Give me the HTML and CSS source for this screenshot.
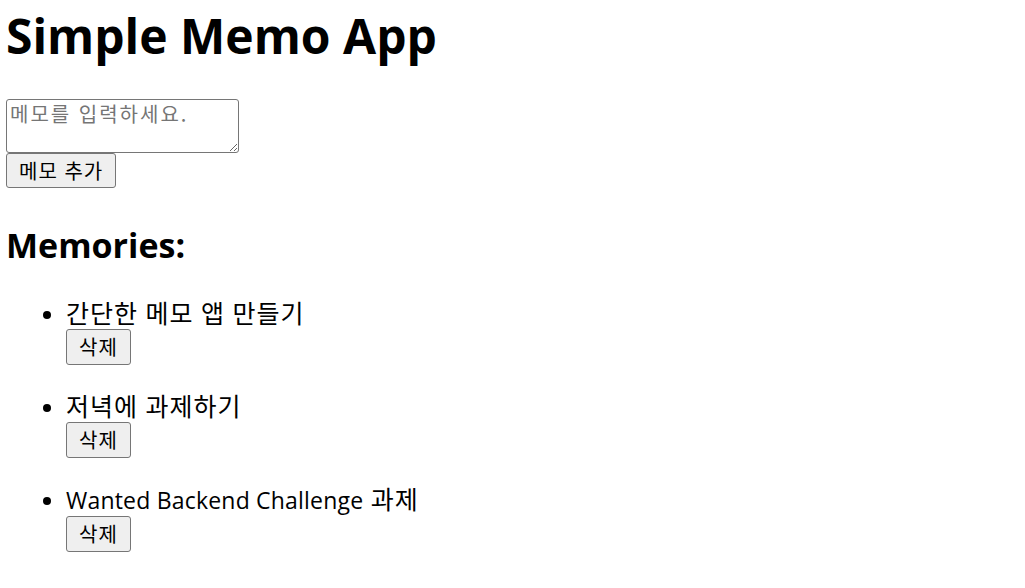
FILE: index.html
```html
<!DOCTYPE html>
<html lang="ko">
<head>
<meta charset="utf-8">
<title>Simple Memo App</title>
<link rel="stylesheet" href="styles.css">
</head>
<body>
<h1 class="title" lang="en">Simple Memo App</h1>
<div class="memo-form">
  <textarea class="memo-input" placeholder="메모를 입력하세요."></textarea>
  <button class="btn btn-add">메모 추가</button>
</div>
<h2 class="subtitle" lang="en">Memories:</h2>
<ul class="memo-list">
  <li class="memo-item">
    <div class="memo-text">간단한 메모 앱 만들기</div>
    <button class="btn btn-delete">삭제</button>
  </li>
  <li class="memo-item">
    <div class="memo-text">저녁에 과제하기</div>
    <button class="btn btn-delete">삭제</button>
  </li>
  <li class="memo-item">
    <div class="memo-text"><span lang="en">Wanted Backend Challenge</span> 과제</div>
    <button class="btn btn-delete">삭제</button>
  </li>
</ul>
</body>
</html>
```

FILE: styles.css
```css
body {
  margin: 0;
  padding: 0 6px;
  font-family: "Open Sans", "Noto Sans CJK KR", sans-serif;
  font-size: 22px;
  color: #000;
  background: #fff;
}

.title {
  font-size: 48px;
  font-weight: bold;
  line-height: 56px;
  margin: 8px 0 35px;
}

.memo-form {
  display: flex;
  flex-direction: column;
  align-items: flex-start;
}

.memo-input {
  box-sizing: border-box;
  width: 233px;
  height: 54px;
  margin: 0;
  padding: 2px 3px;
  border: 1px solid #767676;
  border-radius: 3px;
  font-family: "Noto Sans CJK KR", sans-serif;
  font-size: 20px;
  letter-spacing: 2px;
  line-height: 24px;
  color: #000;
}

.memo-input::placeholder {
  color: #757575;
}

.btn {
  box-sizing: border-box;
  margin: 0;
  padding: 0 12px;
  height: 35px;
  border: 1px solid #767676;
  border-radius: 3px;
  background: #efefef;
  color: #000;
  font-family: "Noto Sans CJK KR", sans-serif;
  font-size: 20px;
  letter-spacing: 1px;
  line-height: 31px;
}

.btn-delete {
  height: 36px;
  line-height: 32px;
}

.subtitle {
  font-size: 34px;
  font-weight: bold;
  line-height: 44px;
  margin: 35px 0 30px;
}

.memo-list {
  margin: 0;
  padding-left: 60px;
}

.memo-item {
  margin-bottom: 25px;
}

.memo-text {
  font-size: 25px;
  letter-spacing: 1px;
  line-height: 32px;
}

.memo-text span:lang(en) {
  font-size: 23px;
  letter-spacing: 0.2px;
}
```
